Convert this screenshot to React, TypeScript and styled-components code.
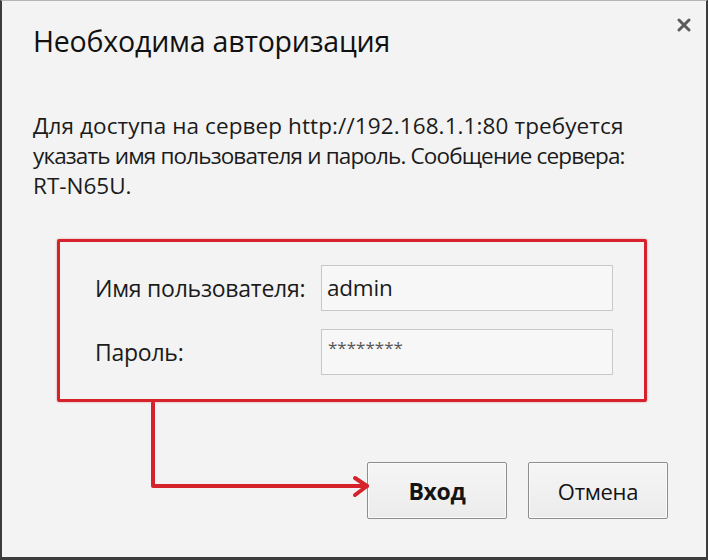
import React from "react";
import styled, { createGlobalStyle } from "styled-components";

const Global = createGlobalStyle`
  html, body { margin: 0; padding: 0; background: #f3f3f3; }
  * { box-sizing: border-box; }
  body { font-family: "Open Sans", "Noto Sans", sans-serif; color: #1b1b1b; }
`;

const Dialog = styled.div`
  position: relative;
  width: 708px;
  height: 560px;
  background: #f3f3f3;
  border-top: 1px solid #b5b5b5;
  border-left: 2px solid #3c3c3c;
  border-right: 2px solid #3c3c3c;
  border-bottom: 3px solid #3c3c3c;
  display: flex;
  flex-direction: column;
`;

const Header = styled.div`
  display: flex;
  justify-content: space-between;
  align-items: flex-start;
  padding: 21px 14px 0 31px;
  height: 90px;
`;

const Title = styled.h1`
  margin: 0;
  font-weight: 400;
  font-size: 28.5px;
  line-height: 38px;
  letter-spacing: -0.2px;
  color: #111;
`;

const Close = styled.button`
  border: none;
  background: transparent;
  padding: 0;
  margin-top: -5px;
  width: 16px;
  height: 16px;
  display: flex;
  align-items: center;
  justify-content: center;
  cursor: pointer;
`;

const Message = styled.p`
  margin: 20px 0 0 31px;
  font-size: 22.5px;
  line-height: 30px;
  color: #1b1b1b;
`;

const Line = styled.span<{ $tracking: number }>`
  display: block;
  white-space: nowrap;
  letter-spacing: ${(p) => p.$tracking}px;
`;

const Highlight = styled.div`
  margin: 38px 0 0 55px;
  width: 590px;
  height: 163px;
  border: 3px solid #d6232b;
  border-radius: 2px;
  box-shadow: 0 0 2px rgba(214, 35, 43, 0.5);
  padding: 23px 31px 0 35px;
  display: flex;
  flex-direction: column;
  gap: 18px;
`;

const FieldRow = styled.div`
  display: grid;
  grid-template-columns: 226px 1fr;
  align-items: center;
`;

const Label = styled.label`
  font-size: 23px;
  letter-spacing: -0.25px;
  color: #1b1b1b;
`;

const Input = styled.input<{ $masked?: boolean }>`
  height: 46px;
  width: 100%;
  border: 1px solid #c9c9c9;
  background: #f7f7f7;
  padding: ${(p) => (p.$masked ? "0 0 10px 6px" : "0 0 2px 5px")};
  font-family: inherit;
  font-size: ${(p) => (p.$masked ? "17px" : "22.5px")};
  letter-spacing: ${(p) => (p.$masked ? "0px" : "-0.2px")};
  color: ${(p) => (p.$masked ? "#555" : "#1b1b1b")};
  outline: none;
`;

const Footer = styled.div`
  display: flex;
  justify-content: flex-end;
  gap: 21px;
  padding: 60px 38px 0 0;
`;

const Button = styled.button<{ $primary?: boolean }>`
  width: 140px;
  height: 57px;
  border: 1px solid #8e8e8e;
  border-radius: 2px;
  background: linear-gradient(#f5f5f5, #ececec);
  box-shadow: inset 0 0 0 1px #fafafa;
  font-family: inherit;
  font-size: ${(p) => (p.$primary ? "23px" : "22px")};
  font-weight: ${(p) => (p.$primary ? 700 : 400)};
  letter-spacing: -0.3px;
  color: #141414;
  cursor: pointer;
`;

const Connector = styled.svg`
  position: absolute;
  left: 0;
  top: 0;
  pointer-events: none;
`;

export default function App() {
  return (
    <>
      <Global />
      <Dialog>
        <Header>
          <Title>Необходима авторизация</Title>
          <Close aria-label="Закрыть">
            <svg width="14" height="14" viewBox="0 0 14 14">
              <path d="M2 2 L12 12 M12 2 L2 12" stroke="#5c5c5c" strokeWidth="3" strokeLinecap="round" />
            </svg>
          </Close>
        </Header>
        <Message>
          <Line $tracking={0.1}>Для доступа на сервер http://192.168.1.1:80 требуется</Line>
          <Line $tracking={-0.85}>указать имя пользователя и пароль. Сообщение сервера:</Line>
          <Line $tracking={0}>RT-N65U.</Line>
        </Message>
        <Highlight>
          <FieldRow>
            <Label>Имя пользователя:</Label>
            <Input readOnly value="admin" />
          </FieldRow>
          <FieldRow>
            <Label>Пароль:</Label>
            <Input readOnly $masked value="********" />
          </FieldRow>
        </Highlight>
        <Footer>
          <Button $primary>Вход</Button>
          <Button>Отмена</Button>
        </Footer>
        <Connector width="708" height="560" viewBox="0 0 708 560">
          <g stroke="#d6232b" strokeWidth="4" fill="none" strokeLinecap="round" strokeLinejoin="round">
            <path d="M151 402 L151 485 L365 485" />
            <path d="M353 477 L365 485 L353 494" />
          </g>
        </Connector>
      </Dialog>
    </>
  );
}
